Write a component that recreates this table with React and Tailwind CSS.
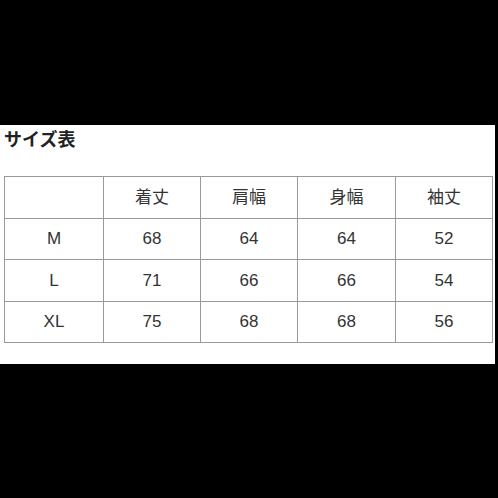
import React from 'react';

const SizeTable = () => {
  const headers = ['', '着丈', '肩幅', '身幅', '袖丈'];
  const rows = [
    ['M', '68', '64', '64', '52'],
    ['L', '71', '66', '66', '54'],
    ['XL', '75', '68', '68', '56'],
  ];
  const widths = ['w-[99px]', 'w-[97px]', 'w-[97px]', 'w-[98px]', 'w-[97px]'];

  return (
    <div
      className="w-[498px] h-[498px] bg-black flex flex-col"
      style={{ fontFamily: '"Liberation Sans", "Noto Sans CJK JP", sans-serif' }}
    >
      <div className="h-[125px]" />
      <div className="h-[239px] bg-white mr-[3px] pl-[4px] pt-[2px]">
        <h1 className="text-[18px] leading-[26px] font-bold text-[#222]">サイズ表</h1>
        <table className="mt-[23px] border-collapse text-[17px] text-[#333]">
          <tbody>
            <tr>
              {headers.map((h, i) => (
                <td
                  key={i}
                  className={`${widths[i]} h-[41.5px] border border-[#9a9a9a] text-center p-0`}
                >
                  {h}
                </td>
              ))}
            </tr>
            {rows.map((row, r) => (
              <tr key={r}>
                {row.map((c, i) => (
                  <td
                    key={i}
                    className={`${widths[i]} h-[41.5px] border border-[#9a9a9a] text-center p-0`}
                  >
                    {c}
                  </td>
                ))}
              </tr>
            ))}
          </tbody>
        </table>
      </div>
    </div>
  );
};

export default SizeTable;
